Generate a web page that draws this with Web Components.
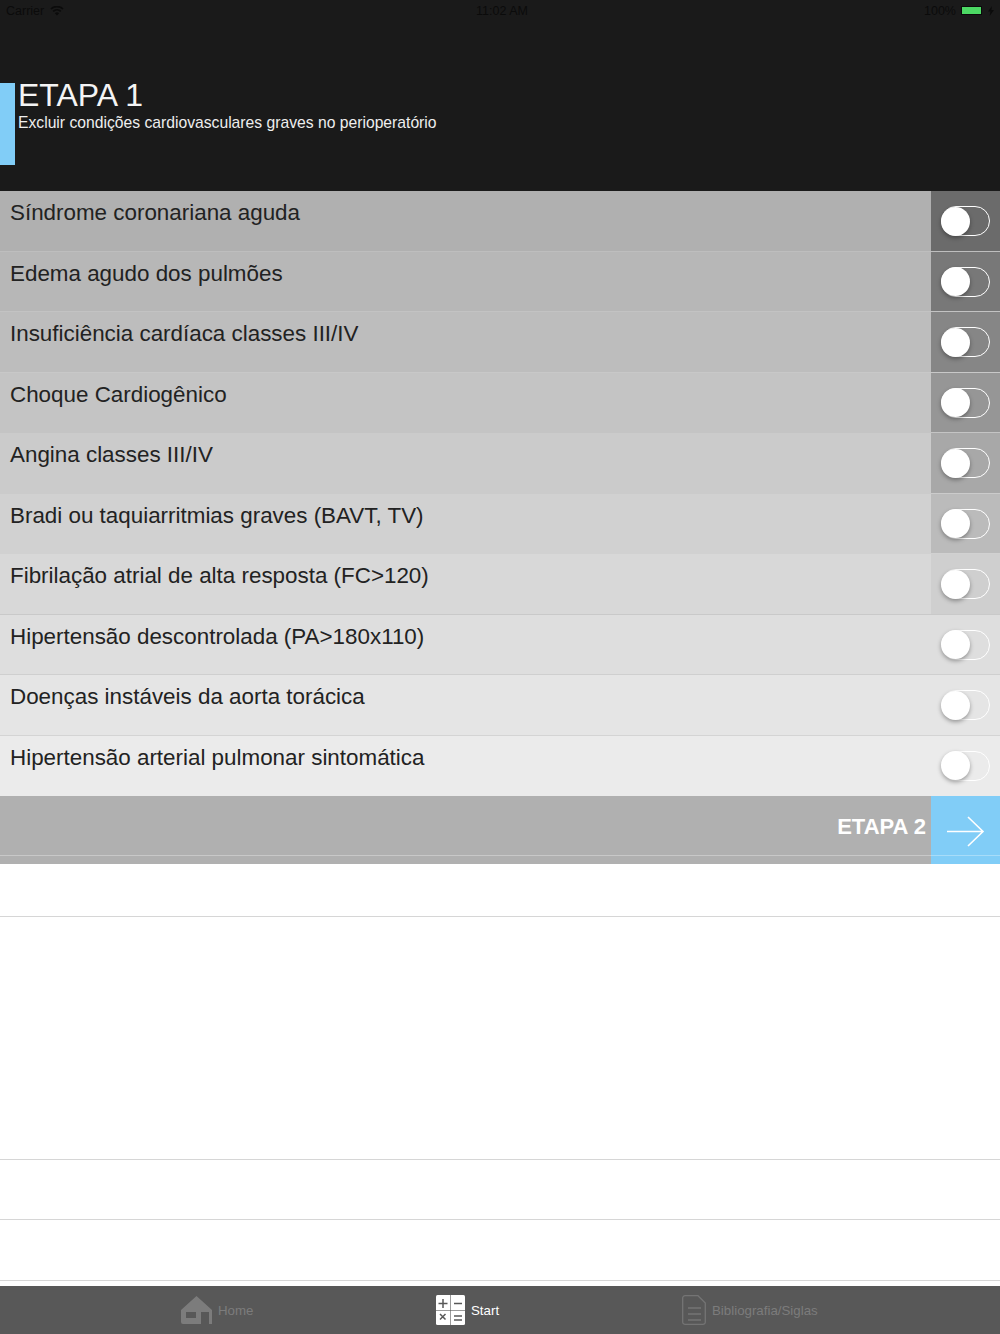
<!DOCTYPE html>
<html lang="pt">
<head>
<meta charset="utf-8">
<title>Etapa 1</title>
<style>
  html, body { margin: 0; padding: 0; background: #fff; }
  body { font-family: "Liberation Sans", Arial, sans-serif; }
</style>
</head>
<body>
<app-screen>
  <status-bar></status-bar>
  <step-header title="ETAPA 1" subtitle="Excluir condições cardiovasculares graves no perioperatório"></step-header>
  <check-list>
    <check-row shade="#b0b0b0" cell="#6b6b6b" line="#bebebe">Síndrome coronariana aguda</check-row>
    <check-row shade="#b7b7b7" cell="#787878" line="#c3c3c3">Edema agudo dos pulmões</check-row>
    <check-row shade="#bdbdbd" cell="#868686" line="#c8c8c8">Insuficiência cardíaca classes III/IV</check-row>
    <check-row shade="#c4c4c4" cell="#969696" line="#c4c4c4">Choque Cardiogênico</check-row>
    <check-row shade="#cbcbcb" cell="#a8a8a8" line="#cbcbcb">Angina classes III/IV</check-row>
    <check-row shade="#d1d1d1" cell="#bbbbbb" line="#d1d1d1">Bradi ou taquiarritmias graves (BAVT, TV)</check-row>
    <check-row shade="#d8d8d8" cell="#cfcfcf" line="#c9c9c9">Fibrilação atrial de alta resposta (FC&gt;120)</check-row>
    <check-row shade="#dedede" cell="#dedede" line="#cfcfcf">Hipertensão descontrolada (PA&gt;180x110)</check-row>
    <check-row shade="#e5e5e5" cell="#e5e5e5" line="#d4d4d4">Doenças instáveis da aorta torácica</check-row>
    <check-row shade="#ebebeb" cell="#ebebeb" line="#ebebeb">Hipertensão arterial pulmonar sintomática</check-row>
  </check-list>
  <next-bar>ETAPA 2</next-bar>
  <empty-table></empty-table>
  <tab-bar>
    <tab-item icon="home">Home</tab-item>
    <tab-item icon="calc" active>Start</tab-item>
    <tab-item icon="doc">Bibliografia/Siglas</tab-item>
  </tab-bar>
</app-screen>

<script>
class AppScreen extends HTMLElement {
  constructor() {
    super();
    this.attachShadow({ mode: 'open' }).innerHTML = `
      <style>
        :host { display: flex; flex-direction: column; width: 1000px; height: 1334px; overflow: hidden; background: #fff; font-family: "Liberation Sans", Arial, sans-serif; }
      </style>
      <slot></slot>`;
  }
}
customElements.define('app-screen', AppScreen);

class StatusBar extends HTMLElement {
  constructor() {
    super();
    this.attachShadow({ mode: 'open' }).innerHTML = `
      <style>
        :host { display: grid; grid-template-columns: 1fr auto 1fr; align-items: center; height: 20px; padding: 1px 6px 0 6px; box-sizing: border-box; background: #1a1a1a; color: #0b0b0b; font-size: 12.500px; }
        .left, .right { display: flex; align-items: center; }
        .left { gap: 6px; }
        .time { padding-left: 4px; }
        .right { justify-content: flex-end; }
        .batt { box-sizing: border-box; width: 21px; height: 9px; margin-left: 5px; background: #4cd964; border: 1px solid #0b0b0b; }
        svg { display: block; }
        .bolt { margin-left: 6px; }
      </style>
      <div class="left">
        <span>Carrier</span>
        <svg width="14" height="10" viewBox="0 0 14 10"><path d="M7 9.600 4.900 7.200a3 3 0 0 1 4.200 0zM3.700 6 2.600 4.800a6.400 6.400 0 0 1 8.800 0L10.300 6a4.800 4.800 0 0 0-6.600 0zM1.500 3.600.4 2.400a9.600 9.600 0 0 1 13.200 0l-1.100 1.200a8 8 0 0 0-11 0z" fill="#0b0b0b"/></svg>
      </div>
      <span class="time">11:02 AM</span>
      <div class="right">
        <span>100%</span>
        <div class="batt"></div>
        <svg class="bolt" width="6" height="10" viewBox="0 0 6 10"><path d="M4 0 0 5.600h2.400L1.600 10 6 4H3.400z" fill="#0b0b0b"/></svg>
      </div>`;
  }
}
customElements.define('status-bar', StatusBar);

class StepHeader extends HTMLElement {
  constructor() {
    super();
    this.attachShadow({ mode: 'open' }).innerHTML = `
      <style>
        :host { display: flex; align-items: flex-start; gap: 3px; height: 171px; padding-top: 63px; box-sizing: border-box; background: #1a1a1a; color: #fff; }
        .accent { flex: none; width: 15px; height: 82px; background: #81cdf7; }
        h1 { margin: -1px 0 0; font-size: 32px; font-weight: 400; line-height: 26px; color: #f4f4f4; }
        p { margin: 6px 0 0; font-size: 15.700px; line-height: 18px; color: #eee; }
      </style>
      <div class="accent"></div>
      <div>
        <h1 id="t"></h1>
        <p id="s"></p>
      </div>`;
  }
  connectedCallback() {
    this.shadowRoot.getElementById('t').textContent = this.getAttribute('title');
    this.shadowRoot.getElementById('s').textContent = this.getAttribute('subtitle');
  }
}
customElements.define('step-header', StepHeader);

class CheckList extends HTMLElement {
  constructor() {
    super();
    this.attachShadow({ mode: 'open' }).innerHTML = `
      <style>
        :host { display: grid; grid-auto-rows: 60.5px; }
      </style>
      <slot></slot>`;
  }
}
customElements.define('check-list', CheckList);

class ToggleSwitch extends HTMLElement {
  constructor() {
    super();
    this.attachShadow({ mode: 'open' }).innerHTML = `
      <style>
        :host { display: flex; align-items: center; box-sizing: border-box; width: 49px; height: 30px; border: 1.5px solid #fff; border-radius: 15px; }
        .knob { width: 29px; height: 29px; margin-left: -1px; border-radius: 50%; background: #fff; box-shadow: 0 2px 4px rgba(0,0,0,.35); }
      </style>
      <div class="knob"></div>`;
  }
}
customElements.define('toggle-switch', ToggleSwitch);

class CheckRow extends HTMLElement {
  constructor() {
    super();
    this.attachShadow({ mode: 'open' }).innerHTML = `
      <style>
        :host { display: grid; grid-template-columns: 1fr 69px; box-sizing: border-box; background: var(--shade); border-bottom: 1px solid var(--line); }
        .label { padding: 8px 0 0 10px; font-size: 22.400px; line-height: 27px; color: #222; }
        .cell { display: flex; justify-content: center; padding-top: 15px; background: var(--cell); }
      </style>
      <div class="label"><slot></slot></div>
      <div class="cell"><toggle-switch></toggle-switch></div>`;
  }
  connectedCallback() {
    this.style.setProperty('--shade', this.getAttribute('shade'));
    this.style.setProperty('--cell', this.getAttribute('cell'));
    this.style.setProperty('--line', this.getAttribute('line'));
  }
}
customElements.define('check-row', CheckRow);

class NextBar extends HTMLElement {
  constructor() {
    super();
    this.attachShadow({ mode: 'open' }).innerHTML = `
      <style>
        :host { display: grid; grid-template-columns: 1fr 69px; height: 68px; background: #b0b0b0; position: relative; }
        .label { display: flex; justify-content: flex-end; padding: 17px 5px 0 0; font-size: 22px; line-height: 27px; font-weight: 700; color: #fff; }
        .go { display: flex; justify-content: center; padding-top: 20px; background: #81cdf7; }
        .line { position: absolute; left: 0; right: 0; top: 59px; height: 1px; background: rgba(255,255,255,.3); }
      </style>
      <div class="label"><slot></slot></div>
      <div class="go">
        <svg width="38" height="32" viewBox="0 0 38 32" fill="none" stroke="#fff" stroke-width="1.600"><path d="M0 15.500H36M21 1l15 14.500L21 30"/></svg>
      </div>
      <div class="line"></div>`;
  }
}
customElements.define('next-bar', NextBar);

class EmptyTable extends HTMLElement {
  constructor() {
    super();
    this.attachShadow({ mode: 'open' }).innerHTML = `
      <style>
        :host { display: grid; grid-template-rows: 53px 243px 60px 61px 5px; height: 422px; background: #fff; }
        div { border-bottom: 1px solid #d6d6d6; box-sizing: border-box; }
        div:last-child { border: 0; }
      </style>
      <div></div><div></div><div></div><div></div><div></div>`;
  }
}
customElements.define('empty-table', EmptyTable);

class TabBar extends HTMLElement {
  constructor() {
    super();
    this.attachShadow({ mode: 'open' }).innerHTML = `
      <style>
        :host { display: grid; grid-template-columns: 255px 246px 1fr; height: 48px; padding-left: 181px; box-sizing: border-box; background: #585858; }
      </style>
      <slot></slot>`;
  }
}
customElements.define('tab-bar', TabBar);

const tabIcons = {
  home: `<svg width="31" height="30" viewBox="0 0 31 30"><path fill="#7c7c7c" fill-rule="evenodd" d="M15.500 1 31 15v14h-3V17H20v12H2a2 2 0 0 1-2-2V15zM5 17v6h10v-6z"/></svg>`,
  calc: `<svg width="29" height="30" viewBox="0 0 29 30"><rect width="29" height="30" rx="1.500" fill="#fff"/><g stroke="#585858" fill="none"><path d="M14.500 0v30M0 15.500h29" stroke-width=".6"/><path d="M7 4v9M2.500 8.500h9M18 8.500h8M18 21h8M18 25h8M4 19l5.500 5.500M9.500 19 4 24.500" stroke-width="1.500"/></g></svg>`,
  doc: `<svg width="24" height="30" viewBox="0 0 24 30" fill="none" stroke="#747474" stroke-width="1.300"><path d="M3 .7h13L23.300 8v19a2.300 2.300 0 0 1-2.300 2.300H3A2.300 2.300 0 0 1 .7 27V3A2.300 2.300 0 0 1 3 .7z"/><path d="M6 13h13M6 19h13M6 25h13" stroke-width="1.600"/></svg>`
};

class TabItem extends HTMLElement {
  constructor() {
    super();
    this.attachShadow({ mode: 'open' }).innerHTML = `
      <style>
        :host { display: flex; align-items: center; gap: 6px; padding-top: 1px; font-size: 13.300px; color: #7c7c7c; }
        :host([active]) { color: #fff; }
        svg { display: block; }
        #i { margin-top: -1px; }
      </style>
      <div id="i"></div>
      <slot></slot>`;
  }
  connectedCallback() {
    this.shadowRoot.getElementById('i').innerHTML = tabIcons[this.getAttribute('icon')];
  }
}
customElements.define('tab-item', TabItem);
</script>
</body>
</html>
